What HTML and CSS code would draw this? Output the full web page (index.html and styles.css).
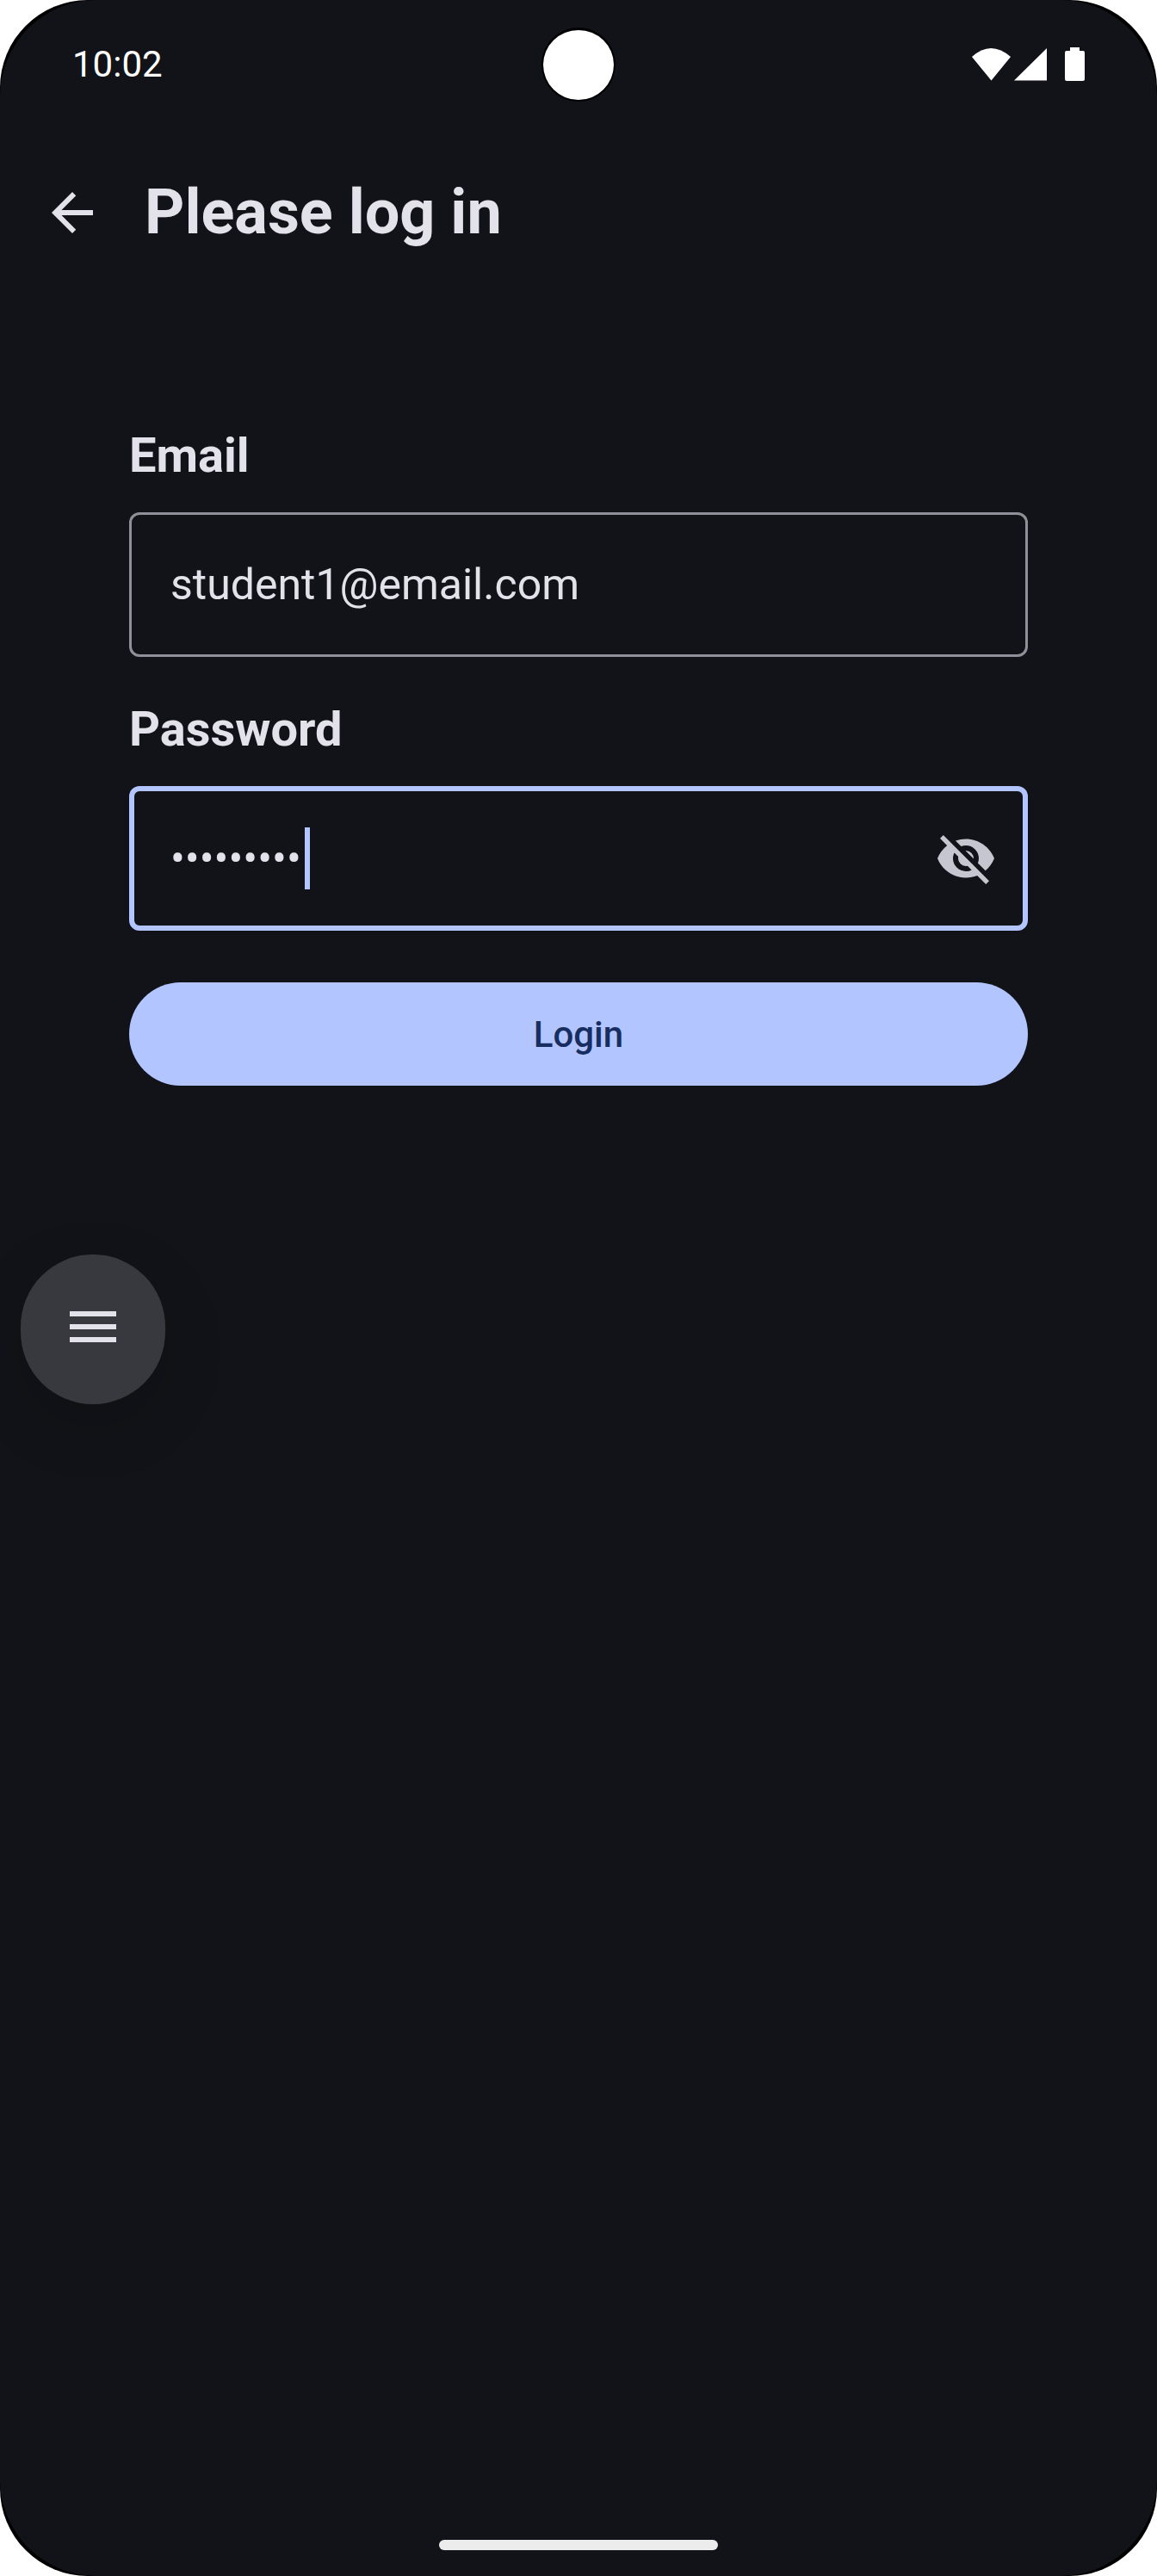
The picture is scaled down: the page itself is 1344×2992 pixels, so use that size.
FILE: index.html
```html
<!DOCTYPE html>
<html lang="en">
<head>
  <meta charset="utf-8">
  <meta name="viewport" content="width=device-width, initial-scale=1">
  <title>Please log in</title>
  <link rel="stylesheet" href="styles.css">
</head>
<body>
  <div class="bezel">
    <div class="screen">
      <div class="status-bar">
        <time class="clock">10:02</time>
        <span class="camera"></span>
        <svg class="status-icons" viewBox="0 0 132 40" aria-hidden="true">
          <path d="M1 11Q23 -9 46 11L23.500 38.500Z"/>
          <path d="M50 38.500L88 1V38.500Z"/>
          <path d="M115 0h11v4h4q2 0 2 2v31q0 2 -2 2h-19q-2 0 -2 -2v-31q0 -2 2 -2h4z"/>
        </svg>
      </div>

      <header class="app-bar">
        <button class="icon-button" type="button" aria-label="Back">
          <svg class="icon" viewBox="0 0 24 24" aria-hidden="true"><path d="M20 11H7.830l5.590-5.590L12 4l-8 8 8 8 1.410-1.410L7.830 13H20v-2z"/></svg>
        </button>
        <h1 class="title">Please log in</h1>
      </header>

      <main class="content">
        <form class="login-form">
          <label class="label" for="email">Email</label>
          <div class="field">
            <input class="input" id="email" type="email" value="student1@email.com">
          </div>
          <label class="label" for="password">Password</label>
          <div class="field field-active">
            <input class="input" id="password" type="password" value="password1">
            <span class="caret"></span>
            <button class="icon-button icon-muted" type="button" aria-label="Show password">
              <svg class="icon" viewBox="0 0 24 24" aria-hidden="true"><path d="M11.830 9L15 12.160V12A3 3 0 0 0 12 9h-.17M7.530 9.800l1.550 1.550C9.030 11.560 9 11.770 9 12a3 3 0 0 0 3 3c.22 0 .44-.03.65-.08l1.550 1.550C13.530 16.800 12.790 17 12 17a5 5 0 0 1-5-5c0-.79.2-1.530.53-2.200M2 4.270l2.280 2.280.45.45C3.080 8.300 1.780 10 1 12c1.730 4.390 6 7.500 11 7.500 1.550 0 3.030-.3 4.380-.84l.43.42L19.730 22 21 20.730 3.270 3M12 7a5 5 0 0 1 5 5c0 .64-.13 1.260-.36 1.820l2.930 2.930c1.500-1.250 2.700-2.890 3.430-4.750-1.730-4.390-6-7.500-11-7.500-1.400 0-2.740.25-4 .7l2.170 2.150C10.740 7.130 11.350 7 12 7z"/></svg>
            </button>
          </div>
          <button class="submit" type="submit">Login</button>
        </form>
      </main>

      <button class="menu-button" type="button" aria-label="Menu">
        <svg class="icon" viewBox="0 0 24 24" aria-hidden="true"><path d="M3 18h18v-2H3v2zm0-5h18v-2H3v2zm0-7v2h18V6H3z"/></svg>
      </button>

      <div class="home-bar"></div>
    </div>
  </div>
</body>
</html>
```
FILE: styles.css
```css
* {
  box-sizing: border-box;
}

body {
  margin: 0;
  background: #fff;
  color: #e3e1e9;
  font-family: Roboto, sans-serif;
}

button {
  border: 0;
  padding: 0;
  background: none;
  color: inherit;
  font-family: inherit;
  cursor: pointer;
}

/* The black bezel shows only where the screen's corners are rounder. */
.bezel {
  border-radius: 102px;
  background: #000;
}

.screen {
  display: flex;
  flex-direction: column;
  min-height: 100vh;
  padding-bottom: 30px;
  border-radius: 112px;
  background: #121318;
}

.status-bar {
  display: grid;
  grid-template-columns: 1fr auto 1fr;
  align-items: center;
  height: 150px;
  padding: 0 84px;
}

.clock {
  color: #fff;
  font-size: 42px;
  line-height: 48px;
}

.camera {
  width: 86px;
  height: 86px;
  border: 2px solid #000;
  border-top-width: 3px;
  border-radius: 50%;
  background: #fff;
}

.status-icons {
  justify-self: end;
  width: 132px;
  height: 40px;
  fill: #fff;
}

.app-bar {
  display: flex;
  align-items: center;
  gap: 48px;
  height: 194px;
  padding: 0 48px;
}

.title {
  margin: 0;
  font-size: 72px;
  font-weight: 700;
  line-height: 96px;
}

.icon-button {
  display: flex;
}

.icon {
  width: 72px;
  height: 72px;
  fill: currentColor;
}

.icon-muted {
  color: #c6c6d0;
}

.content {
  padding: 149px 150px 0;
}

.login-form {
  display: flex;
  flex-direction: column;
}

.label {
  margin-bottom: 30px;
  font-size: 56px;
  font-weight: 700;
  line-height: 72px;
}

.field {
  position: relative;
  display: flex;
  align-items: center;
  height: 168px;
  margin-bottom: 48px;
  padding: 0 36px 0 48px;
  border-radius: 12px;
  box-shadow: inset 0 0 0 3px #90909a;
}

.field-active {
  margin-bottom: 60px;
  box-shadow: inset 0 0 0 6px #b2c5ff;
}

.input {
  flex: 1;
  min-width: 0;
  padding: 0;
  border: 0;
  outline: 0;
  background: none;
  color: inherit;
  font-family: inherit;
  font-size: 50px;
  line-height: 72px;
}

.caret {
  position: absolute;
  left: 204px;
  width: 6px;
  height: 72px;
  background: #b2c5ff;
}

.submit {
  height: 120px;
  border-radius: 60px;
  background: #b2c5ff;
  color: #182e60;
  font-size: 42px;
  font-weight: 500;
}

.menu-button {
  display: flex;
  align-items: center;
  justify-content: center;
  width: 168px;
  height: 174px;
  margin: 196px 24px 0;
  padding-bottom: 6px;
  border-radius: 84px;
  background: #38393e;
  box-shadow: 0 24px 72px rgba(0, 0, 0, 0.15);
}

.home-bar {
  align-self: center;
  width: 324px;
  height: 12px;
  margin-top: auto;
  border-radius: 6px;
  background: #ececec;
}
```
